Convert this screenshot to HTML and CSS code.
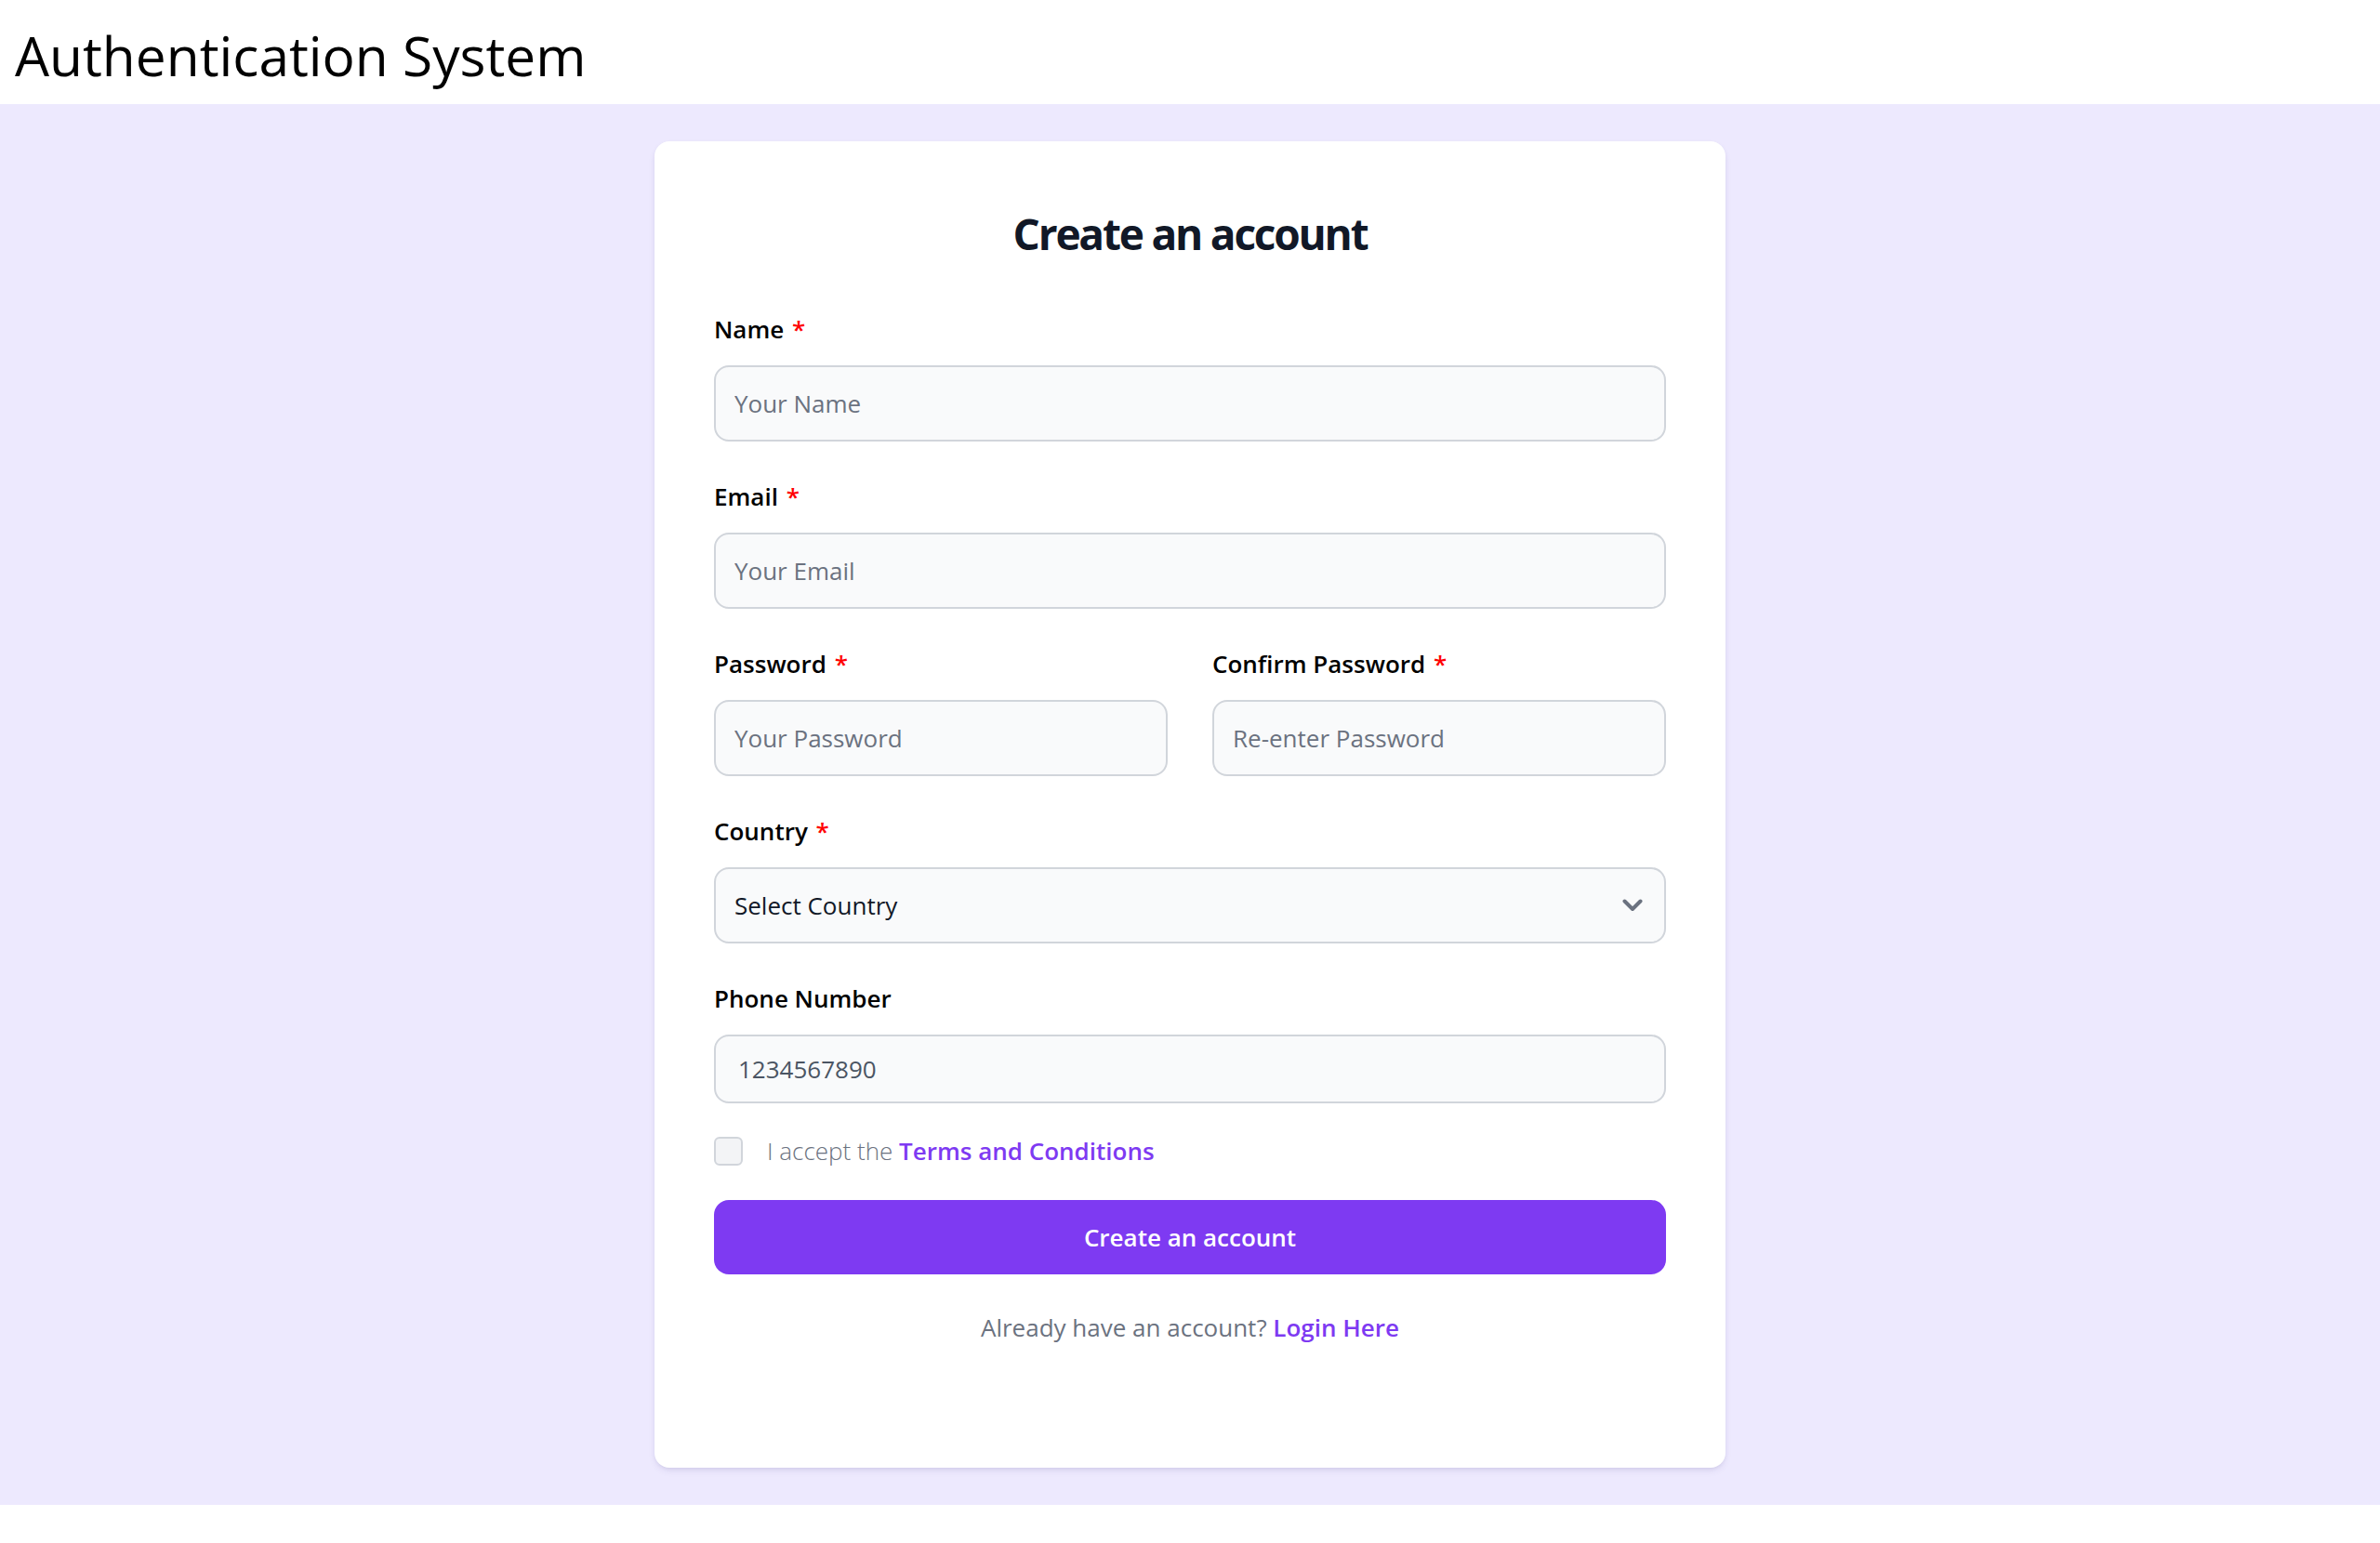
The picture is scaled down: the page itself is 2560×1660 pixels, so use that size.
FILE: index.html
```html
<!DOCTYPE html>
<html lang="en">
<head>
<meta charset="utf-8">
<title>Authentication System</title>
<link rel="stylesheet" href="styles.css">
</head>
<body>
<header class="topbar">
  <h1 class="app-title">Authentication System</h1>
</header>
<main class="stage">
  <section class="card">
    <h2 class="card-title">Create an account</h2>
    <form class="form">
      <div class="field">
        <label class="label">Name <span class="req">*</span></label>
        <input class="input" type="text" placeholder="Your Name">
      </div>
      <div class="field">
        <label class="label">Email <span class="req">*</span></label>
        <input class="input" type="email" placeholder="Your Email">
      </div>
      <div class="row-2">
        <div class="field">
          <label class="label">Password <span class="req">*</span></label>
          <input class="input" type="password" placeholder="Your Password">
        </div>
        <div class="field">
          <label class="label">Confirm Password <span class="req">*</span></label>
          <input class="input" type="password" placeholder="Re-enter Password">
        </div>
      </div>
      <div class="field">
        <label class="label">Country <span class="req">*</span></label>
        <div class="select-wrap">
          <select class="input select">
            <option>Select Country</option>
          </select>
          <svg class="chevron" width="22" height="14" viewBox="0 0 22 14" aria-hidden="true">
            <path d="M2.5 2.5 L11 11 L19.5 2.5" fill="none" stroke="#6b7280" stroke-width="4" stroke-linecap="round" stroke-linejoin="round"/>
          </svg>
        </div>
      </div>
      <div class="field">
        <label class="label">Phone Number</label>
        <input class="input phone" type="tel" placeholder="1234567890">
      </div>
      <div class="check-row">
        <span class="checkbox"></span>
        <span class="check-text">I accept the <a class="link" href="#">Terms and Conditions</a></span>
      </div>
      <button class="btn" type="button">Create an account</button>
      <p class="footer-text">Already have an account? <a class="link" href="#">Login Here</a></p>
    </form>
  </section>
</main>
</body>
</html>
```

FILE: styles.css
```css
* { box-sizing: border-box; }

html, body {
  margin: 0;
  padding: 0;
  background: #ffffff;
  font-family: "Open Sans", "Noto Sans", sans-serif;
}

.topbar {
  background: #ffffff;
  height: 112px;
  padding: 19px 16px 13px;
}

.app-title {
  margin: 0;
  font-size: 58.6px;
  font-weight: 400;
  line-height: 80px;
  color: #000000;
}

.stage {
  background: #ede9fe;
  padding: 40px 0;
  display: flex;
  justify-content: center;
}

.card {
  width: 1152px;
  background: #ffffff;
  border-radius: 16px;
  box-shadow: 0 4px 8px -2px rgba(60, 50, 120, 0.12), 0 2px 4px -1px rgba(60, 50, 120, 0.08);
  padding: 64px 64px 131px;
}

.card-title {
  margin: 0 0 48px;
  text-align: center;
  font-size: 46px;
  letter-spacing: -2.2px;
  line-height: 70px;
  font-weight: 700;
  color: #111827;
}

.form {
  display: flex;
  flex-direction: column;
  gap: 39px;
  margin: 0;
}

.field {
  display: flex;
  flex-direction: column;
  gap: 19px;
  min-width: 0;
}

.label {
  font-size: 26px;
  line-height: 40px;
  font-weight: 600;
  color: #000000;
}

.req {
  color: #ff0000;
  margin-left: 2px;
}

.row-2 {
  display: grid;
  grid-template-columns: 1fr 1fr;
  column-gap: 48px;
}

.input {
  width: 100%;
  height: 82px;
  border: 2px solid #d1d5db;
  border-radius: 16px;
  background: #f9fafb;
  padding: 0 20px;
  font-family: inherit;
  font-size: 26px;
  color: #111827;
  outline: none;
}

.input::placeholder {
  color: #6b7280;
  opacity: 1;
}

.select-wrap {
  position: relative;
}

.select {
  appearance: none;
  -webkit-appearance: none;
}

.chevron {
  position: absolute;
  right: 25px;
  top: 34px;
  pointer-events: none;
}

.input.phone {
  height: 74px;
  padding-left: 24px;
}

.input.phone::placeholder {
  color: #4b5563;
}

.check-row {
  display: flex;
  align-items: center;
  gap: 26px;
  height: 31px;
  margin-top: -3px;
}

.checkbox {
  width: 31px;
  height: 31px;
  flex: none;
  border: 2px solid #d1d5db;
  border-radius: 6px;
  background: #f3f4f6;
}

.check-text {
  font-size: 26px;
  line-height: 31px;
  font-weight: 300;
  color: #6b7280;
}

.link {
  color: #7e3af2;
  font-weight: 600;
  text-decoration: none;
}

.btn {
  height: 80px;
  margin-top: -2px;
  border: none;
  border-radius: 16px;
  background: #7e3af2;
  color: #ffffff;
  font-family: inherit;
  font-size: 26px;
  font-weight: 600;
}

.footer-text {
  margin: -2px 0 0;
  text-align: center;
  font-size: 26px;
  line-height: 40px;
  color: #6b7280;
}
```
